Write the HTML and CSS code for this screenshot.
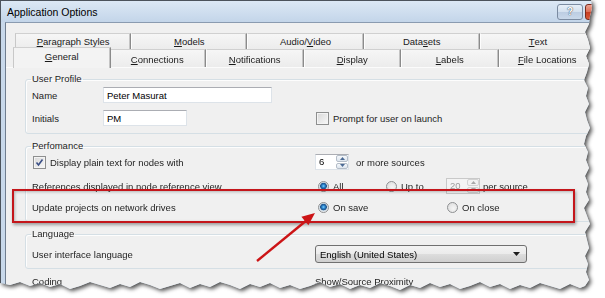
FILE: index.html
```html
<!DOCTYPE html>
<html>
<head>
	<meta charset="utf-8"/>
	<title>Application Options</title>
	<link rel="stylesheet" href="styles.css">
</head>
<body>
<div class="paper">
	<div class="window">
		<div class="titlebar">
			<span class="title">Application Options</span>
			<div class="capbtns">
				<span class="help">?</span>
				<span class="close"></span>
			</div>
		</div>
		<div class="client">
			<div class="tabrow back">
				<div class="tab"><u>P</u>aragraph Styles</div>
				<div class="tab"><u>M</u>odels</div>
				<div class="tab">Audio/<u>V</u>ideo</div>
				<div class="tab">Data<u>s</u>ets</div>
				<div class="tab"><u>T</u>ext</div>
			</div>
			<div class="tabrow front">
				<div class="tab sel"><u>G</u>eneral</div>
				<div class="tab"><u>C</u>onnections</div>
				<div class="tab"><u>N</u>otifications</div>
				<div class="tab"><u>D</u>isplay</div>
				<div class="tab"><u>L</u>abels</div>
				<div class="tab"><u>F</u>ile Locations</div>
			</div>

			<div class="page">
				<!-- user profile -->
				<fieldset class="group profile">
					<legend>User Profile</legend>
					<div class="prow">
						<span class="lbl">Name</span>
						<span class="edit name">Peter Masurat</span>
					</div>
					<div class="prow second">
						<span class="lbl">Initials</span>
						<span class="edit initials">PM</span>
						<span class="check"><span class="box"></span>Prompt for user on launch</span>
					</div>
				</fieldset>

				<!-- performance -->
				<fieldset class="group perf">
					<legend>Perfomance</legend>
					<div class="frow r1">
						<span class="check"><span class="box on"><svg width="9" height="9" viewBox="0 0 9 9"><polyline points="1.5,4.5 3.5,7 7.5,1.5" fill="none" stroke="#3b4f86" stroke-width="1.6"/></svg></span>Display plain text for nodes with</span>
						<span class="cell">
							<span class="spin">
								<span class="val">6</span>
								<span class="arrows">
									<span class="up"><svg width="5" height="3" viewBox="0 0 5 3"><polygon points="0,3 2.5,0 5,3" fill="#4b6a94"/></svg></span>
									<span class="dn"><svg width="5" height="3" viewBox="0 0 5 3"><polygon points="0,0 2.5,3 5,0" fill="#4b6a94"/></svg></span>
								</span>
							</span>
							<span class="after">or more sources</span>
						</span>
					</div>
					<div class="frow r2">
						<span>References displayed in node reference view</span>
						<span class="cell opts">
							<span class="opt all"><span class="radio on"></span>All</span>
							<span class="opt upto"><span class="radio"></span>Up to</span>
							<span class="spin off">
								<span class="val">20</span>
								<span class="arrows">
									<span class="up"><svg width="5" height="3" viewBox="0 0 5 3"><polygon points="0,3 2.5,0 5,3" fill="#a8a8a8"/></svg></span>
									<span class="dn"><svg width="5" height="3" viewBox="0 0 5 3"><polygon points="0,0 2.5,3 5,0" fill="#a8a8a8"/></svg></span>
								</span>
							</span>
							<span class="after">per source</span>
						</span>
					</div>
					<div class="frow r3">
						<span>Update projects on network drives</span>
						<span class="cell opts">
							<span class="opt save"><span class="radio on"></span>On save</span>
							<span class="opt"><span class="radio"></span>On close</span>
						</span>
					</div>
				</fieldset>

				<!-- language -->
				<fieldset class="group lang">
					<legend>Language</legend>
					<div class="frow">
						<span>User interface language</span>
						<span class="combo">English (United States)<svg width="7" height="4" viewBox="0 0 7 4"><polygon points="0,0 7,0 3.5,4" fill="#1c1c1c"/></svg></span>
					</div>
				</fieldset>

				<div class="coding">
					<span>Coding</span>
					<span>Show/Source Proximity</span>
				</div>
			</div>
		</div>
	</div>

	<div class="highlight"></div>
	<svg class="pointer" width="605" height="298" viewBox="0 0 605 298">
		<line x1="257" y1="261" x2="307" y2="220" stroke="#cc1416" stroke-width="2.4"/>
		<polygon points="315,213 308.4,225.3 301.4,216.7" fill="#cc1416"/>
	</svg>
</div>
</body>
</html>
```

FILE: styles.css
```css
body{
	margin: 0;
	background: #fff;
	font-family: "Liberation Sans", Arial, sans-serif;
	font-size: 9.5px;
	color: #1e1e1e;
}
.paper{
	position: relative;
	width: 605px;
	height: 298px;
	filter: drop-shadow(2px 2px 2px rgba(0,0,0,0.7));
}
.window{
	width: 604px;
	height: 298px;
	box-sizing: border-box;
	overflow: hidden;
	display: flex;
	flex-direction: column;
	background: #c8d8ea;
	border-top: 1px solid #4c535c;
	border-left: 1px solid #4c535c;
	clip-path: polygon(0 0,591px 0,592px 8px,590px 16px,589px 24px,585px 32px,588px 40px,590px 48px,586px 56px,589px 64px,587px 72px,584px 80px,588px 88px,586px 96px,589px 104px,585px 112px,587px 120px,590px 128px,586px 136px,584px 144px,588px 152px,586px 160px,589px 168px,585px 176px,588px 184px,586px 192px,589px 200px,584px 208px,587px 216px,590px 224px,585px 232px,587px 240px,589px 248px,585px 256px,588px 264px,586px 272px,589px 280px,585px 286px,580px 288px,570px 284px,560px 289px,550px 286px,540px 283px,530px 288px,520px 285px,510px 289px,500px 284px,490px 287px,480px 282px,470px 286px,460px 289px,450px 284px,440px 287px,430px 283px,420px 288px,410px 285px,400px 290px,390px 286px,380px 283px,370px 288px,360px 285px,350px 289px,340px 284px,330px 287px,320px 282px,310px 286px,300px 289px,290px 285px,280px 288px,270px 283px,260px 287px,250px 284px,240px 289px,230px 285px,220px 282px,210px 287px,200px 284px,190px 288px,180px 283px,170px 286px,160px 289px,150px 285px,140px 282px,130px 287px,120px 284px,110px 288px,100px 285px,90px 282px,80px 286px,70px 289px,60px 284px,50px 287px,40px 283px,30px 286px,20px 282px,10px 285px,0 283px);
}

/* caption */
.titlebar{
	height: 21px;
	flex: none;
	display: flex;
	align-items: center;
	justify-content: space-between;
	padding-left: 6px;
	background: linear-gradient(#dce8f5, #c3d5e9);
}
.title{
	font-size: 10.5px;
	color: #000;
}
.capbtns{
	width: 47px;
	align-self: flex-start;
	margin-top: 3px;
	display: flex;
	gap: 2px;
}
.help{
	width: 24px;
	height: 14px;
	border: 1px solid #7b8ba1;
	border-radius: 3px;
	background: linear-gradient(#e7eff8 0, #d3e0ee 50%, #bccde2 51%, #c9d8ea 100%);
	color: #fff;
	font-size: 10px;
	font-weight: bold;
	text-align: center;
	line-height: 14px;
	text-shadow: 0 0 1px #3c4a5e, 0 0 1px #3c4a5e;
}
.close{
	flex: 1;
	height: 14px;
	border: 1px solid #7a2a1c;
	border-radius: 3px;
	background: linear-gradient(#eba392 0, #dc6d55 50%, #c63d22 51%, #d65838 100%);
}

/* client area */
.client{
	flex: 1;
	margin-left: 4px;
	border-top: 1px solid #8a9bb0;
	border-left: 1px solid #6f7d8f;
	background: #f0f0f0;
}

/* tabs */
.tabrow{
	display: flex;
}
.tabrow.back{
	margin: 10px 0 0 9px;
	width: 581px;
	height: 16px;
}
.tabrow.front{
	margin-left: 8px;
	width: 582px;
	height: 18px;
	position: relative;
}
.tab{
	flex: 1;
	box-sizing: border-box;
	display: flex;
	align-items: center;
	justify-content: center;
	border-top: 1px solid #d0d0d0;
	border-left: 1px solid #fdfdfd;
	border-right: 1px solid #8b8b8b;
	box-shadow: inset -1px 0 #c4c4c4;
	background: linear-gradient(#f6f6f6, #ececec);
	color: #1a1a1a;
}
.back .tab:first-child{
	border-left: 1px solid #c8c8c8;
}
.front .tab{
	padding-top: 1px;
}
.front .tab.sel{
	margin: -2px -2px 0 -1px;
	height: 21px;
	align-items: flex-start;
	padding-top: 3px;
	background: #f3f3f3;
	border-left: 1px solid #c8c8c8;
	position: relative;
	z-index: 1;
}

/* page */
.page{
	padding: 0 13px 0 19px;
	border-top: 1px solid #fbfbfb;
}
.group{
	margin: 5px 0 0 0;
	padding: 0 6px 6px 6px;
	border: 1px solid #d5dfe5;
	border-radius: 3px;
	box-shadow: inset 1px 1px #fdfdfd;
}
.group.profile{
	margin-top: 4px;
	padding-bottom: 7px;
}
legend{
	padding: 0 1px;
	margin-left: -1px;
	line-height: 14px;
	color: #1e1e1e;
}

/* user profile */
.prow{
	display: grid;
	grid-template-columns: 71px 212px 1fr;
	align-items: center;
	height: 16px;
	margin-top: 1px;
}
.prow.second{
	margin-top: 7px;
}
.edit{
	height: 16px;
	box-sizing: border-box;
	padding-left: 3px;
	display: flex;
	align-items: center;
	background: #fff;
	border: 1px solid #dde3e9;
	border-top-color: #abadb3;
	color: #000;
}
.edit.name{
	width: 169px;
}
.edit.initials{
	width: 84px;
}
.check{
	display: flex;
	align-items: center;
	gap: 4px;
}
.box{
	width: 11px;
	height: 11px;
	border: 1px solid #8e8f8f;
	background: linear-gradient(135deg, #d8d8d8, #f8f8f8);
	box-shadow: inset 0 0 0 1px #f4f4f4;
	display: flex;
	align-items: center;
	justify-content: center;
}
.check .box{
	margin-left: 1px;
}

/* performance */
.frow{
	display: grid;
	grid-template-columns: 283px 1fr;
	align-items: center;
	height: 16px;
}
.perf .r1{
	margin-top: 1px;
}
.perf .r2{
	margin-top: 8px;
}
.perf .r3{
	margin-top: 5px;
}
.cell{
	display: flex;
	align-items: center;
}
.spin{
	width: 34px;
	height: 16px;
	box-sizing: border-box;
	display: flex;
	background: #fff;
	border: 1px solid #dde3e9;
	border-top-color: #abadb3;
}
.spin .val{
	flex: 1;
	padding-left: 3px;
	line-height: 14px;
	color: #000;
}
.arrows{
	width: 12px;
	display: flex;
	flex-direction: column;
	gap: 1px;
}
.arrows span{
	flex: 1;
	display: flex;
	align-items: center;
	justify-content: center;
	border: 1px solid #b4bdc8;
	border-radius: 2px;
	background: linear-gradient(#f5f8fb, #dde5ee);
}
.spin.off{
	border-color: #c9c9c9;
	background: #f4f4f4;
}
.spin.off .val{
	color: #9d9d9d;
}
.spin.off .arrows span{
	border-color: #d3d3d3;
	background: #f2f2f2;
}
.after{
	margin-left: 7px;
}
.spin.off + .after{
	margin-left: 3px;
}
.opts{
	padding-left: 3px;
}
.opt{
	display: flex;
	align-items: center;
	gap: 4px;
}
.opt.all{
	width: 68px;
}
.opt.upto{
	width: 60px;
}
.opt.save{
	width: 129px;
}
.radio{
	width: 11px;
	height: 11px;
	box-sizing: border-box;
	border-radius: 50%;
	border: 1px solid #8d8f91;
	background: radial-gradient(circle at 60% 60%, #f6f6f6, #d9d9d9);
}
.radio.on{
	background: radial-gradient(circle at 50% 45%, #7fd0ff 0, #2b86cf 1.5px, #1d4f86 3px, #c6d6e4 3.6px, #f1f1f1 5px);
}

/* language */
.lang .frow{
	height: 17px;
	margin-top: 4px;
}
.combo{
	width: 212px;
	height: 18px;
	box-sizing: border-box;
	display: flex;
	align-items: center;
	justify-content: space-between;
	padding: 0 6px 0 4px;
	border: 1px solid #707070;
	border-radius: 3px;
	background: linear-gradient(#f3f3f3 0, #ebebeb 50%, #dddddd 51%, #cfcfcf 100%);
	color: #000;
}
.coding{
	display: grid;
	grid-template-columns: 283px 1fr;
	margin: 7px 0 0 7px;
	line-height: 12px;
}

/* annotation */
.highlight{
	position: absolute;
	left: 12px;
	top: 189px;
	width: 563px;
	height: 34px;
	box-sizing: border-box;
	border: 2px solid #c4161b;
	box-shadow: 1px 2px 3px rgba(0,0,0,0.35), inset 1px 1px 3px rgba(0,0,0,0.25);
}
.pointer{
	position: absolute;
	left: 0;
	top: 0;
}
```
